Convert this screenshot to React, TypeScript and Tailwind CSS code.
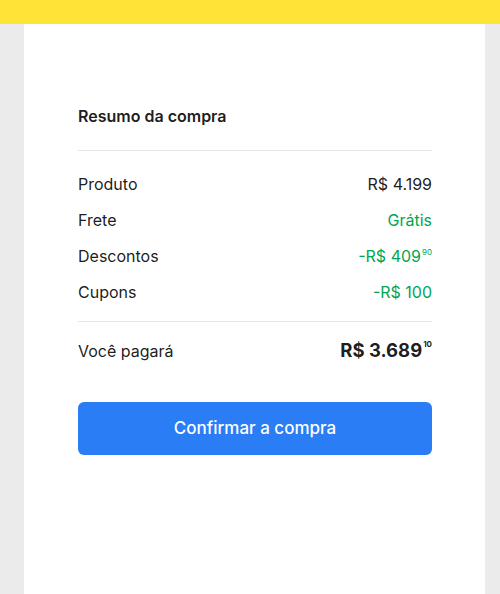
export default function App() {
  const rows = [
    { label: 'Produto', value: 'R$ 4.199', cents: '', green: false },
    { label: 'Frete', value: 'Grátis', cents: '', green: true },
    { label: 'Descontos', value: '-R$ 409', cents: '90', green: true },
    { label: 'Cupons', value: '-R$ 100', cents: '', green: true },
  ];

  return (
    <div className="min-h-[594px] bg-[#ebebeb] flex flex-col" style={{ fontFamily: 'Inter, "Noto Sans", sans-serif' }}>
      <div className="h-6 bg-[#ffe336] shrink-0" />
      <div className="flex-1 flex px-6 pr-[15px]">
        <div className="flex-1 bg-white px-[54px] pr-[53px] pt-[80px] pb-10 text-[rgba(0,0,0,0.9)]">
          <h2 className="text-[16px] font-semibold leading-6 h-[46px]">Resumo da compra</h2>
          <div className="border-t border-[#e6e6e6]" />
          <div className="pt-[21px] pb-[17px] flex flex-col gap-3">
            {rows.map((r) => (
              <div key={r.label} className="flex justify-between items-center h-6 text-[16px]">
                <span>{r.label}</span>
                <span className={r.green ? 'text-[#00a650]' : ''}>
                  {r.value}
                  {r.cents && <sup className="text-[8px] ml-[1px] top-[-0.9em]">{r.cents}</sup>}
                </span>
              </div>
            ))}
          </div>
          <div className="border-t border-[#e6e6e6]" />
          <div className="flex justify-between items-center h-6 mt-[17px] text-[16px]">
            <span>Você pagará</span>
            <span className="text-[18.5px] font-bold">
              R$ 3.689<sup className="text-[8px] ml-[1px] top-[-1.3em]">10</sup>
            </span>
          </div>
          <button className="mt-[39px] w-full h-[53px] rounded-md bg-[#2a7df4] text-white text-[17px] font-medium">
            Confirmar a compra
          </button>
        </div>
      </div>
    </div>
  );
}
